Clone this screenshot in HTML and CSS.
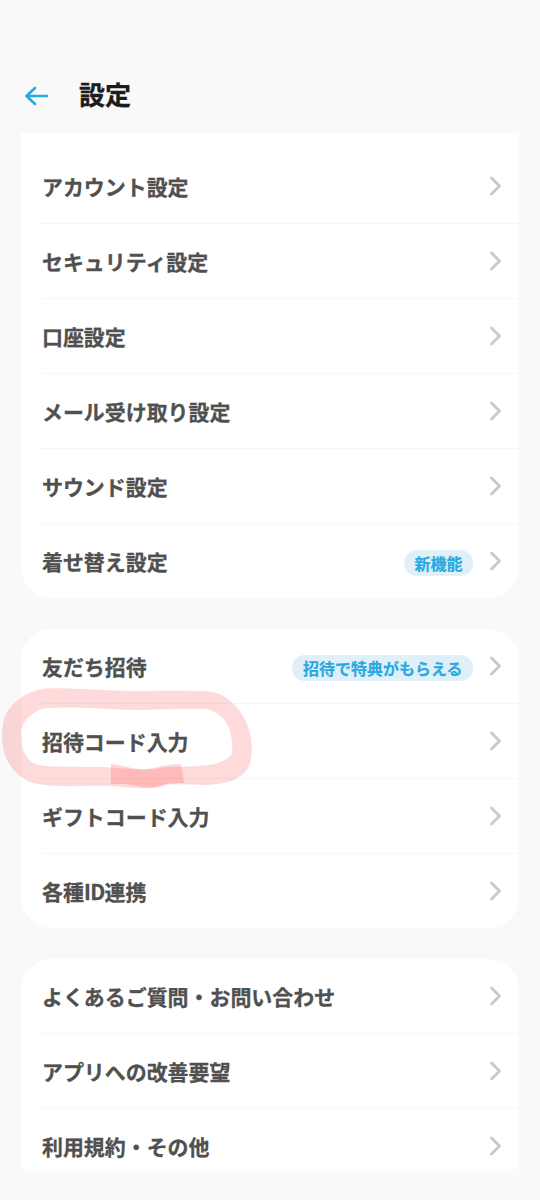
FILE: index.html
```html
<!DOCTYPE html>
<html lang="ja">
<head>
<meta charset="utf-8">
<title>設定</title>
<link rel="stylesheet" href="styles.css">
</head>
<body>
<svg class="symbols" aria-hidden="true">
  <symbol id="chevron" viewBox="0 0 14 22"><path d="M2.500 3 10.500 11 2.500 19"/></symbol>
</svg>
<div class="screen">
  <header class="header">
    <svg class="back" viewBox="0 0 26 22"><path d="M23 11H3M11 3 2.500 11l8.500 8"/></svg>
    <h1 class="title">設定</h1>
  </header>
  <main class="content">
    <section class="card card-first">
      <div class="row"><span class="label">アカウント設定</span><svg class="chevron"><use href="#chevron"/></svg></div>
      <div class="row"><span class="label">セキュリティ設定</span><svg class="chevron"><use href="#chevron"/></svg></div>
      <div class="row"><span class="label">口座設定</span><svg class="chevron"><use href="#chevron"/></svg></div>
      <div class="row"><span class="label">メール受け取り設定</span><svg class="chevron"><use href="#chevron"/></svg></div>
      <div class="row"><span class="label">サウンド設定</span><svg class="chevron"><use href="#chevron"/></svg></div>
      <div class="row"><span class="label">着せ替え設定</span><span class="badge">新機能</span><svg class="chevron"><use href="#chevron"/></svg></div>
    </section>
    <section class="card">
      <div class="row"><span class="label">友だち招待</span><span class="badge">招待で特典がもらえる</span><svg class="chevron"><use href="#chevron"/></svg></div>
      <div class="row"><span class="label">招待コード入力</span><svg class="chevron"><use href="#chevron"/></svg>
        <svg class="marker" viewBox="0 0 260 120">
          <path fill-rule="evenodd" d="M45 8.500C75 7.500 105 11.500 140 11C165 10.500 185 10.500 203 11C213 11.500 219 13 225 17C239 26 248 41 251 58C253 74 251 85 246 91C237 101 225 104 207 105C185 105 172 103 163 106C150 110 132 108 113 106C85 105 60 108 38 104C26 102 15 94 8 82C1 69 1 52 4 39C10 22 27 11 45 8.500ZM47 28C37 29 31 35 26 40C20 45 21 58 23 70C25 76 31 83 38 85C57 88 86 86 110 87.500C127 88 139 91 155 89C172 85 190 88 209 85C218 84 229 79 232 74C233 60 231 43 220 36C213 30 209 29 202 29C180 29 162 29 142 30C113 30 80 26 47 28Z"/>
          <path class="overlap" d="M111 84C123 85 133 90 147 89C160 87 170 84 181 84L184 103C174 103 168 103 160 106C145 110 137 105 125 104H111Z"/>
        </svg>
      </div>
      <div class="row"><span class="label">ギフトコード入力</span><svg class="chevron"><use href="#chevron"/></svg></div>
      <div class="row"><span class="label">各種<span class="latin">ID</span>連携</span><svg class="chevron"><use href="#chevron"/></svg></div>
    </section>
    <section class="card card-last">
      <div class="row"><span class="label">よくあるご質問・お問い合わせ</span><svg class="chevron"><use href="#chevron"/></svg></div>
      <div class="row"><span class="label">アプリへの改善要望</span><svg class="chevron"><use href="#chevron"/></svg></div>
      <div class="row"><span class="label">利用規約・その他</span><svg class="chevron"><use href="#chevron"/></svg></div>
    </section>
  </main>
</div>
</body>
</html>
```
FILE: styles.css
```css
* { box-sizing: border-box; }
body {
  margin: 0;
  background: #fafafa;
  font-family: "Noto Sans CJK JP", sans-serif;
  font-weight: 700;
}
.symbols { display: none; }
.screen {
  display: flex;
  flex-direction: column;
  height: 1200px;
  padding: 60px 0 31px;
  overflow: hidden;
}
.header {
  display: flex;
  flex: none;
  align-items: center;
  gap: 29px;
  height: 73px;
  padding: 0 24px 2px;
  background: #f9f9f9;
}
.back {
  width: 26px;
  height: 22px;
  fill: none;
  stroke: #27a9e1;
  stroke-width: 2.6;
  stroke-linecap: round;
  stroke-linejoin: round;
}
.title {
  margin: 0;
  padding-bottom: 3px;
  color: #1c1c1c;
  font-size: 26px;
  line-height: 36px;
  -webkit-text-stroke: 0.3px currentColor;
}
.content {
  flex: 1;
  min-height: 0;
  padding: 0 21px;
  overflow: hidden;
  background: #f9f9f9;
}
.card {
  margin-bottom: 31px;
  border-radius: 31px;
  background: #fff;
}
.card-first {
  padding-top: 16px;
  border-radius: 0 0 31px 31px;
}
.card-last {
  margin-bottom: 0;
  border-radius: 31px 31px 0 0;
}
.row {
  position: relative;
  display: flex;
  align-items: center;
  height: 75px;
  padding: 0 16px 0 21px;
}
.row:first-child { height: 74px; }
.row + .row::before {
  content: "";
  position: absolute;
  top: 0;
  right: 0;
  left: 21px;
  height: 1px;
  background: #f6f6f6;
}
.label {
  flex: 1;
  color: #505050;
  font-size: 20.95px;
  line-height: 30px;
  -webkit-text-stroke: 0.3px currentColor;
}
.row:first-child .label { padding-bottom: 1px; }
.latin { letter-spacing: -0.6px; }
.badge {
  height: 26px;
  margin: 4px 16px 0 0;
  padding: 0 10.5px;
  border-radius: 13px;
  background: #e1eff9;
  color: #27a9e1;
  font-size: 16px;
  line-height: 26px;
  -webkit-text-stroke: 0.2px currentColor;
}
.chevron {
  width: 14px;
  height: 22px;
  fill: none;
  stroke: #c8c8c8;
  stroke-width: 2.8;
  stroke-linecap: round;
  stroke-linejoin: round;
}
.marker {
  position: absolute;
  top: -23px;
  left: -21px;
  z-index: 1;
  width: 260px;
  height: 120px;
  fill: rgba(248, 60, 60, 0.19);
  pointer-events: none;
}
.marker .overlap { fill: rgba(255, 80, 80, 0.24); }
```
